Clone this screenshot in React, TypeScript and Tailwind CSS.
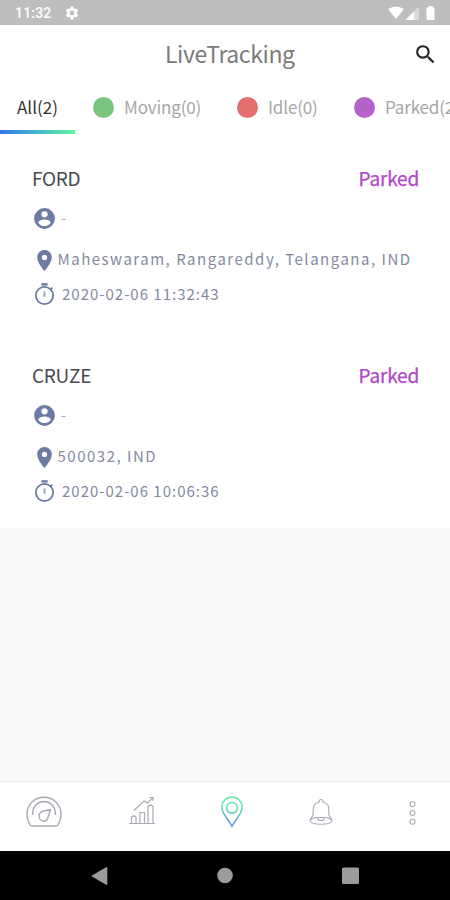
import React from "react";

const SANS = "font-['Noto_Sans_CJK_SC','Noto_Sans',sans-serif]";

const tabs = [
  { label: "Moving(0)", dot: "bg-[#79c57d]", box: "w-[144px]" },
  { label: "Idle(0)", dot: "bg-[#e26e6d]", box: "w-[117px]" },
  { label: "Parked(2)", dot: "bg-[#b663c9]", box: "w-[144px]" },
];

const vehicles = [
  { name: "FORD", place: "Maheswaram, Rangareddy, Telangana, IND", time: "2020-02-06 11:32:43" },
  { name: "CRUZE", place: "500032, IND", time: "2020-02-06 10:06:36" },
];

function StatusBar() {
  return (
    <div className="flex h-[25px] shrink-0 items-center bg-[#bebebe] pl-[15px] pr-[14px] text-white">
      <span className="w-[49px] pt-[2px] font-['Roboto',sans-serif] text-[14px] font-medium leading-[25px] tracking-[0.2px]">11:32</span>
      <svg viewBox="0 0 24 24" className="mt-[1px] size-[16px]" fill="currentColor">
        <path d="M19.14 12.94c.04-.3.06-.61.06-.94s-.02-.64-.07-.94l2.03-1.58a.49.49 0 0 0 .12-.61l-1.92-3.32a.49.49 0 0 0-.59-.22l-2.39.96a7 7 0 0 0-1.62-.94l-.36-2.54A.48.48 0 0 0 13.92 2.4h-3.84a.48.48 0 0 0-.47.41l-.36 2.54a7.3 7.3 0 0 0-1.62.94l-2.39-.96a.48.48 0 0 0-.59.22L2.74 8.87a.48.48 0 0 0 .12.61l2.03 1.58c-.05.3-.09.63-.09.94s.02.64.07.94l-2.03 1.58a.49.49 0 0 0-.12.61l1.92 3.32c.12.22.37.29.59.22l2.39-.96c.5.38 1.03.7 1.62.94l.36 2.54c.05.24.24.41.48.41h3.84c.24 0 .44-.17.47-.41l.36-2.54a7 7 0 0 0 1.62-.94l2.39.96c.22.08.47 0 .59-.22l1.92-3.32a.48.48 0 0 0-.12-.61zM12 15.6A3.6 3.6 0 1 1 12 8.400a3.6 3.6 0 0 1 0 7.2" />
      </svg>
      <svg viewBox="0 0 49 16" className="ml-auto mt-[1px] h-[16px] w-[49px]" fill="currentColor">
        <path d="M1 4Q9 -1 17 4L9 14Z" />
        <path d="M32 1.500V15H18.500Z" opacity=".45" />
        <path d="M27 6.500V15H18.500Z" />
        <path d="M41.500 2.300V1h4v1.300H46q1.500 0 1.500 1V14q0 1-1 1h-6q-1 0-1-1V3.300q0-1 1-1Z" />
      </svg>
    </div>
  );
}

function Tabs() {
  return (
    <div className={`flex h-[49px] shrink-0 overflow-hidden whitespace-nowrap text-[17px] leading-[44px] text-[#a6a6a6] ${SANS}`}>
      <div className="flex w-[75px] shrink-0 flex-col">
        <span className="h-[45px] pl-[17px] text-[#333]">All(2)</span>
        <div className="h-[4px] bg-gradient-to-r from-[#3a74e6] to-[#63f59b]" />
      </div>
      <div className="flex h-[45px] pl-[18px]">
        {tabs.map((t) => (
          <div key={t.label} className={`flex shrink-0 items-center ${t.box}`}>
            <i className={`mr-[10px] size-[21px] rounded-full ${t.dot}`} />
            <span className="pb-[2px] tracking-[-0.15px]">{t.label}</span>
          </div>
        ))}
      </div>
    </div>
  );
}

function Vehicle({ name, place, time }: { name: string; place: string; time: string }) {
  return (
    <article className={`h-[197px] pl-[32px] pr-[31px] text-[#838a9f] ${SANS}`}>
      <div className="flex h-[28px] items-center justify-between text-[19px] leading-[26px]">
        <h2 className="pb-[2px] tracking-[-0.3px] text-[#48484d]">{name}</h2>
        <span className="pb-[2px] tracking-[-0.2px] text-[#b146c8] [-webkit-text-stroke:0.25px_#b146c8]">Parked</span>
      </div>
      <div className="mt-[11px] flex h-[28px] items-center text-[15px] leading-[28px] text-[#a5aab8]">
        <svg viewBox="0 0 24 24" className="size-[25px] fill-[#6c7ba1]">
          <path d="M12 2a10 10 0 1 0 0 20 10 10 0 0 0 0-20m0 3a3 3 0 1 1 0 6 3 3 0 0 1 0-6m0 14.200a7.200 7.200 0 0 1-6-3.220c.03-1.990 4-3.080 6-3.080 1.990 0 5.970 1.090 6 3.080a7.200 7.200 0 0 1-6 3.220" />
        </svg>
        <span className="ml-[4px] pb-[1px]">-</span>
      </div>
      <div className="mt-[14px] flex h-[28px] items-center text-[15px] leading-[28px] tracking-[1.5px]">
        <svg viewBox="0 0 24 24" className="mt-[1px] size-[25px] shrink-0 fill-[#6c7ba1]">
          <path d="M12 2C8.130 2 5 5.130 5 9c0 5.250 7 13 7 13s7-7.750 7-13c0-3.870-3.130-7-7-7m0 9.500a2.500 2.500 0 1 1 0-5 2.500 2.500 0 0 1 0 5" />
        </svg>
        <span className="whitespace-nowrap pb-[2px] pl-[0.5px]">{place}</span>
      </div>
      <div className="mt-[7px] flex h-[28px] items-center text-[15px] leading-[28px] tracking-[1px]">
        <svg viewBox="0 0 24 24" className="mb-[2px] size-[25px] shrink-0" fill="none" stroke="#6c7ba1">
          <circle cx="12" cy="13" r="8.300" strokeWidth="1.700" />
          <path d="M9 2.300h6" strokeWidth="2.300" />
          <path d="M12 9v5" strokeWidth="2" opacity=".65" />
          <path d="m17.500 7.300 2-2" strokeWidth="1.700" />
        </svg>
        <span className="ml-[5px] whitespace-nowrap pb-[2px]">{time}</span>
      </div>
    </article>
  );
}

function BottomNav() {
  return (
    <nav className="flex h-[70px] shrink-0 items-start border-t border-[#ececec] bg-white text-[#a6aab4]">
      <svg viewBox="0 0 36 32" className="ml-[26px] mt-[14px] h-[32px] w-[36px]" fill="none" stroke="currentColor" strokeWidth="1.400">
        <path d="M4.500 29.500C-.5 22 0 12 5.500 6.500c7-7 18-7 25 0 5.500 5.500 6 15.500 1 23Q31 30 29.500 30h-23Q5 30 4.500 29.500Z" />
        <path d="M6.800 19V16.700a11.200 11.200 0 0 1 22.400 0V19" />
        <path d="M24.500 13.500 22.300 20.500C21.500 23.500 20 25.200 17.700 25.200a5 5 0 0 1-4.700-5C13 17.500 15 15.700 17.500 15Z" strokeLinejoin="round" />
      </svg>
      <svg viewBox="0 0 27 30" className="ml-[67px] mt-[14px] h-[30px] w-[27px]" fill="none" stroke="currentColor" strokeWidth="1.200">
        <path d="M0 27.500h26M2.500 27v-6q2-2 4.500 0v6M11 27V16.500h4.500V27M19 27V10.500q2.500-2.500 5 0V27" />
        <path d="M5 14.500 15 5l3.500 2L24 1.500M20.500 1.500H24V5" />
      </svg>
      <svg viewBox="0 0 24 32" className="ml-[64px] mt-[14px] h-[32px] w-[24px]" fill="none" stroke="url(#pin)" strokeWidth="1.500">
        <defs>
          <linearGradient id="pin" gradientUnits="userSpaceOnUse" x1="15" y1="3" x2="8" y2="29">
            <stop offset=".3" stopColor="#63e8a5" />
            <stop offset=".9" stopColor="#5c98e8" />
          </linearGradient>
        </defs>
        <path d="M12 30.300C9 24 1.800 18 1.800 11.300a10.200 10.200 0 0 1 20.400 0C22.200 18 15 24 12 30.300Z" />
        <circle cx="12" cy="11.800" r="5.400" />
      </svg>
      <svg viewBox="0 0 26 30" className="ml-[64px] mt-[15px] h-[30px] w-[26px]" fill="none" stroke="currentColor" strokeWidth="1.100">
        <path d="M11 5.500C7 6 5.200 8.500 5.200 12v5c0 2.500-3 4-3.200 6.500C3 28.500 23 28.500 24 23.500c-.2-2.500-3.200-4-3.200-6.500v-5c0-3.500-1.800-6-5.800-6.500" />
        <path d="M11 5.500V4q2-3.500 4 0v1.500M2 23.500q2-2.500 6-3h10q4 .5 6 3M9.500 21c1 3.500 6 3.500 7 0" />
      </svg>
      <svg viewBox="0 0 8 28" className="ml-[74px] mt-[17px] h-[28px] w-[8px]" fill="none" stroke="currentColor" strokeWidth="1.100">
        <circle cx="4.500" cy="5.300" r="2.500" />
        <circle cx="4.500" cy="14" r="2.500" />
        <circle cx="4.500" cy="22.700" r="2.500" />
      </svg>
    </nav>
  );
}

export default function App() {
  return (
    <main className="flex h-[900px] w-[450px] flex-col overflow-hidden bg-[#fafafa]">
      <StatusBar />
      <header className="flex h-[60px] shrink-0 items-center justify-between bg-white pl-[165px] pr-[12px]">
        <h1 className={`whitespace-nowrap pb-[3px] text-[23px] leading-[57px] tracking-[-0.4px] text-[#7b7b7b] ${SANS}`}>LiveTracking</h1>
        <svg viewBox="0 0 24 24" className="mt-[-2px] size-[25px]" fill="#222">
          <path d="M15.500 14h-.79l-.28-.27A6.470 6.470 0 0 0 16 9.500 6.500 6.500 0 1 0 9.500 16c1.610 0 3.090-.59 4.230-1.570l.27.280v.790l5 4.990L20.490 19zm-6 0a4.500 4.500 0 1 1 0-9 4.500 4.500 0 0 1 0 9" />
        </svg>
      </header>
      <div className="flex h-[443px] shrink-0 flex-col bg-white">
        <Tabs />
        <section className="mt-[31px]">
          {vehicles.map((v) => (
            <Vehicle key={v.name} {...v} />
          ))}
        </section>
      </div>
      <div className="flex-1" />
      <BottomNav />
      <div className="flex h-[49px] shrink-0 items-center bg-black">
        <svg viewBox="0 0 450 49" className="h-[49px] w-[450px]" fill="#9b9b9b">
          <path d="M106 16.200q1.300-.7 1.300.8v16q0 1.500-1.300.8L92 25.500q-.8-.5 0-1Z" />
          <circle cx="225" cy="24.500" r="7.800" />
          <rect x="342" y="16.500" width="17" height="16.500" rx="1.500" />
        </svg>
      </div>
    </main>
  );
}
